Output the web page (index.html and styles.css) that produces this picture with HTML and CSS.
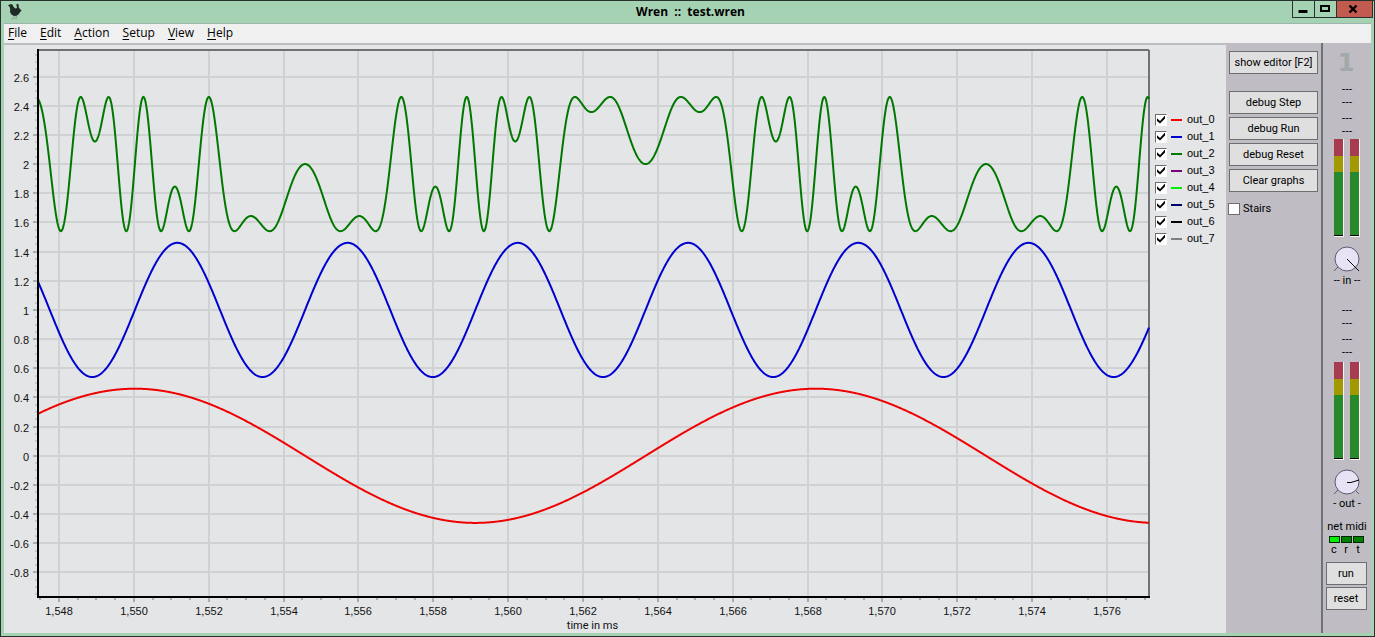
FILE: index.html
```html
<!DOCTYPE html>
<html lang="en">
<head>
<meta charset="utf-8">
<title>Wren :: test.wren</title>
<link rel="stylesheet" href="styles.css">
</head>
<body>
<div class="window">
  <header class="titlebar">
    <svg class="bird" viewBox="0 0 14 17" aria-hidden="true">
      <path fill="#1f2a26" d="M0 2.600 1.600 1.600 3 1 4.600 1.800 5.600 4 7.500 5.600 9 5 8.400 1.400 9.200 .8 10.600 1.600 10.800 4.500 12 6 13.600 7.800 12 9 11 11 8.600 12.800 6 13 3.400 11.400 2 9 2.200 6 1.600 3.800Z"/>
      <path fill="none" stroke="#7d9b8a" stroke-width=".8" d="M6.500 13 5.600 15.200M8.300 13 8.400 15M3.800 15.800 6 15.400M7 15.600 9 15"/>
    </svg>
    <h1 class="title">Wren&nbsp; ::&nbsp; test.wren</h1>
    <div class="controls">
      <button class="control" aria-label="Minimize"><svg viewBox="0 0 12 10"><path fill="#000" d="M1.500 6h9v3h-9z"/></svg></button>
      <button class="control" aria-label="Maximize"><svg viewBox="0 0 12 10"><path fill="none" stroke="#000" stroke-width="2" d="M2 2h8v5H2z"/></svg></button>
      <button class="control close" aria-label="Close"><svg viewBox="0 0 12 10"><path fill="none" stroke="#000" stroke-width="2.400" d="m2.500 1.500 7 7M9.500 1.500l-7 7"/></svg></button>
    </div>
  </header>
  <nav class="menu">
    <button><u>F</u>ile</button>
    <button><u>E</u>dit</button>
    <button><u>A</u>ction</button>
    <button><u>S</u>etup</button>
    <button><u>V</u>iew</button>
    <button><u>H</u>elp</button>
  </nav>
  <main class="content">
    <section class="chart"><svg id="plot" role="img" aria-label="Signal graph"></svg></section>
    <section class="legend">
      <label><input type="checkbox" checked><i class="key red"></i>out_0</label>
      <label><input type="checkbox" checked><i class="key blue"></i>out_1</label>
      <label><input type="checkbox" checked><i class="key green"></i>out_2</label>
      <label><input type="checkbox" checked><i class="key purple"></i>out_3</label>
      <label><input type="checkbox" checked><i class="key lime"></i>out_4</label>
      <label><input type="checkbox" checked><i class="key navy"></i>out_5</label>
      <label><input type="checkbox" checked><i class="key black"></i>out_6</label>
      <label><input type="checkbox" checked><i class="key gray"></i>out_7</label>
    </section>
    <aside class="tools">
      <button class="btn editor">show editor [F2]</button>
      <button class="btn">debug Step</button>
      <button class="btn">debug Run</button>
      <button class="btn">debug Reset</button>
      <button class="btn">Clear graphs</button>
      <label class="stairs"><input type="checkbox">Stairs</label>
    </aside>
    <aside class="mixer">
      <div class="number">1</div>
      <div class="levels"><span>---</span><span>---</span><span class="apart">---</span><span>---</span></div>
      <div class="meters"><i class="meter"></i><i class="meter"></i></div>
      <label class="knob">
        <svg viewBox="0 0 30 30"><path class="legs" d="m6 23-4 4M23 23l4 4"/><circle cx="15" cy="15" r="12"/><path class="hand" d="m15 15 12 12"/></svg>
        <input type="range" aria-label="in level"><span>-- in --</span>
      </label>
      <div class="levels second"><span>---</span><span>---</span><span class="apart">---</span><span>---</span></div>
      <div class="meters"><i class="meter"></i><i class="meter"></i></div>
      <label class="knob">
        <svg viewBox="0 0 30 30"><path class="legs" d="m6 23-4 4M23 23l4 4"/><circle cx="15" cy="15" r="12"/><path class="hand" d="M15 15.500h4L27 13"/></svg>
        <input type="range" aria-label="out level"><span>- out -</span>
      </label>
      <div class="net">net midi</div>
      <div class="leds">
        <span><i class="led on"></i>c</span><span><i class="led"></i>r</span><span><i class="led"></i>t</span>
      </div>
      <button class="btn">run</button>
      <button class="btn">reset</button>
    </aside>
  </main>
</div>
<script src="plot.js"></script>
</body>
</html>
```
FILE: styles.css
```css
* { box-sizing: border-box; }
body {
  margin: 0;
  font: 11px/14px Roboto, "Open Sans", sans-serif;
  color: #000;
}
button { font: inherit; color: inherit; cursor: pointer; }
.window {
  display: flex;
  flex-direction: column;
  min-height: 100vh;
  border: 1px solid #26322e;
  background: #a5d2b3;
}
.titlebar {
  display: grid;
  grid-template-columns: 1fr auto 1fr;
  height: 22px;
  padding: 0 1px 0 7px;
}
.bird { width: 14px; height: 17px; margin-top: 2px; }
.title { margin: 0; font: bold 12px/21px "Open Sans", sans-serif; }
.controls { display: flex; justify-content: flex-end; height: 17px; }
.control {
  display: flex;
  align-items: center;
  justify-content: center;
  width: 22px;
  padding: 0 1px 0 0;
  border: 1px solid #26322e;
  border-width: 0 0 1px 1px;
  background: none;
}
.control svg { width: 12px; height: 10px; }
.control.close { width: 37px; padding-right: 3px; border-right-width: 1px; background: #c35a50; }
.menu {
  display: flex;
  align-items: flex-start;
  gap: 13px;
  height: 22px;
  margin: 0 3px;
  padding: 0 4px;
  border-top: 1px solid #9eb5ad;
  border-bottom: 2px solid #bcbfc1;
  background: #f0f0f0;
}
.menu button {
  padding: 0;
  border: 0;
  background: none;
  font: 12px/17px "Open Sans", sans-serif;
}
.menu u { text-underline-offset: 2px; }
.content { display: flex; flex: 1; margin: 0 3px 3px; background: #e3e5e7; }
.chart { flex: 1; min-width: 0; min-height: 587px; }
.chart svg {
  display: block;
  width: 100%;
  height: 100%;
  font: 11px "Liberation Sans", Arial, sans-serif;
}
.chart .caption { font-family: Roboto, sans-serif; }
.legend {
  display: flex;
  flex-direction: column;
  width: 76px;
  padding: 66px 0 0 5px;
  font: 11px/17px "Liberation Sans", Arial, sans-serif;
}
.legend label { display: flex; align-items: center; }
input[type="checkbox"] {
  appearance: none;
  position: relative;
  width: 12px;
  height: 12px;
  margin: 0;
  border: 1px solid #6d6d70;
  background: #fff;
}
.legend input[type="checkbox"] { border-right-color: #fff; border-bottom-color: #fff; }
input[type="checkbox"]:checked::before {
  content: "";
  position: absolute;
  inset: 1px;
  background: #000;
  clip-path: polygon(0 35%, 38% 68%, 100% 0, 100% 38%, 38% 100%, 0 70%);
}
.key { width: 11px; height: 2px; margin: 0 5px 0 4px; }
.red { background: #f00000; }
.blue { background: #0000d0; }
.green { background: #007800; }
.purple { background: #780078; }
.lime { background: #00f000; }
.navy { background: #000070; }
.black { background: #000; }
.gray { background: #808080; }
.tools {
  display: flex;
  flex-direction: column;
  gap: 3px;
  width: 97px;
  padding: 0 3px 0 2px;
  border-right: 2px solid #6f7376;
  background: #bfbcc3;
}
.tools, .mixer { margin-top: -2px; padding-top: 8px; }
.btn {
  height: 23px;
  padding: 0;
  border: 1px solid #6e6e71;
  background: #dfdfdf;
  line-height: 14px;
  white-space: nowrap;
}
.tools .btn { margin-left: 1px; }
.btn.editor { margin-bottom: 14px; }
.stairs { display: flex; align-items: center; gap: 3px; margin-top: 7px; }
.mixer {
  display: flex;
  flex-direction: column;
  align-items: center;
  width: 48px;
  background: #bfbcc3;
}
.number { margin-right: 2px; color: #a1a9aa; font: bold 24px/24px "DejaVu Sans", sans-serif; }
.levels { display: flex; flex-direction: column; margin-top: 6px; font-family: "Noto Sans", sans-serif; }
.levels span { line-height: 13px; }
.levels .apart { margin-top: 3px; }
.levels.second { margin-top: 14px; }
.meters { display: flex; gap: 6px; margin-top: 3px; }
.second + .meters { margin-top: 5px; }
.meter {
  width: 10px;
  height: 98px;
  border: solid #f5f5f5;
  border-width: 0 1px 1px 0;
  background: linear-gradient(#a73b50 17px, #a09a00 17px 33px, #28892c 33px 96px, #000 96px);
}
.knob { display: flex; flex-direction: column; align-items: center; position: relative; margin-top: 7px; }
.knob svg { width: 30px; height: 30px; fill: #e8e2f5; stroke: #5f5774; }
.knob .legs, .knob .hand { fill: none; }
.knob .hand { stroke: #000; }
.knob input { position: absolute; top: 0; width: 30px; height: 30px; margin: 0; opacity: 0; }
.net { margin-top: 9px; white-space: nowrap; }
.leds { display: flex; gap: 1px; margin: 2px 2px 6px 0; line-height: 13px; }
.leds span { display: flex; flex-direction: column; align-items: center; width: 11px; }
.led { width: 11px; height: 7px; border: 1px solid #002800; background: #008000; }
.led.on { background: #00f000; }
.mixer .btn { width: 41px; margin: 0 2px 2px 0; }
```
FILE: plot.js
```js
const svg = document.getElementById("plot");
const NS = "http://www.w3.org/2000/svg";

function add(name, attrs, text) {
  const node = document.createElementNS(NS, name);
  for (const key in attrs) node.setAttribute(key, attrs[key]);
  if (text) node.textContent = text;
  svg.appendChild(node);
}

function draw() {
  svg.replaceChildren();
  const left = 34, top = 5;
  const right = svg.clientWidth - 1, bottom = svg.clientHeight - 36;
  const t0 = 1547.44, span = 29.68, low = -0.968, range = 3.75;
  const sx = t => left + (t - t0) / span * (right - left);
  const sy = v => bottom - (v - low) / range * (bottom - top);
  const line = (x1, y1, x2, y2, color, width) =>
    add("line", { x1, y1, x2, y2, stroke: color, "stroke-width": width });

  for (let i = 3095; i <= 3154; i++) {
    const t = i / 2, x = Math.round(sx(t));
    if (t > t0 && t < t0 + span) line(x, bottom, x, bottom + 3, "#aaadaf", 2);
  }
  for (let v = -19; v <= 55; v++) {
    const y = Math.round(sy(v / 20));
    line(left - 3, y, left, y, "#aaadaf", 1);
  }
  for (let t = 1548; t <= 1576; t += 2) {
    const x = Math.round(sx(t));
    line(x, top, x, bottom, "#cfd1d3", 2);
    line(x, bottom, x, bottom + 5, "#aaadaf", 2);
    add("text", { x, y: bottom + 18, "text-anchor": "middle", fill: "#111" }, t.toLocaleString("en-US"));
  }
  for (let n = -4; n <= 13; n++) {
    const y = Math.round(sy(n / 5));
    line(left, y, right, y, "#cfd1d3", 2);
    line(left - 5, y, left, y, "#aaadaf", 2);
    add("text", { x: left - 9, y: y + 5, "text-anchor": "end", fill: "#111" }, String(n / 5));
  }
  line(left, top, right, top, "#6f7376", 2);
  line(right, top, right, bottom, "#6f7376", 2);

  // out_2 is a sine whose phase is driven by the product of the other two signals.
  const slow = t => Math.sin((t - 1563.67) / 18.19 * 2 * Math.PI);
  const fast = t => Math.sin((t - 1563.67) / 18.19 * 8 * Math.PI);
  const driven = t => {
    const p = slow(t) * fast(t);
    return Math.sin(4.99 * p + 0.78 * p ** 3 + 0.99 * p ** 5);
  };
  const wave = (fn, base, color) => {
    const points = [];
    for (let x = left; x <= right; x += 0.5) {
      const t = t0 + (x - left) / (right - left) * span;
      points.push(x + "," + sy(base + 0.46 * fn(t)).toFixed(2));
    }
    add("polyline", { points: points.join(" "), fill: "none", stroke: color, "stroke-width": 2 });
  };
  wave(slow, 0, "#f00000");
  wave(fast, 1, "#0000d0");
  wave(driven, 2, "#007800");

  line(left, top - 1, left, bottom + 1, "#000", 2);
  line(left, bottom, right + 1, bottom, "#000", 2);
  add("text", { x: (left + right) / 2 - 1, y: bottom + 32, "text-anchor": "middle", class: "caption", fill: "#111" }, "time in ms");
}

draw();
window.addEventListener("resize", draw);
```
